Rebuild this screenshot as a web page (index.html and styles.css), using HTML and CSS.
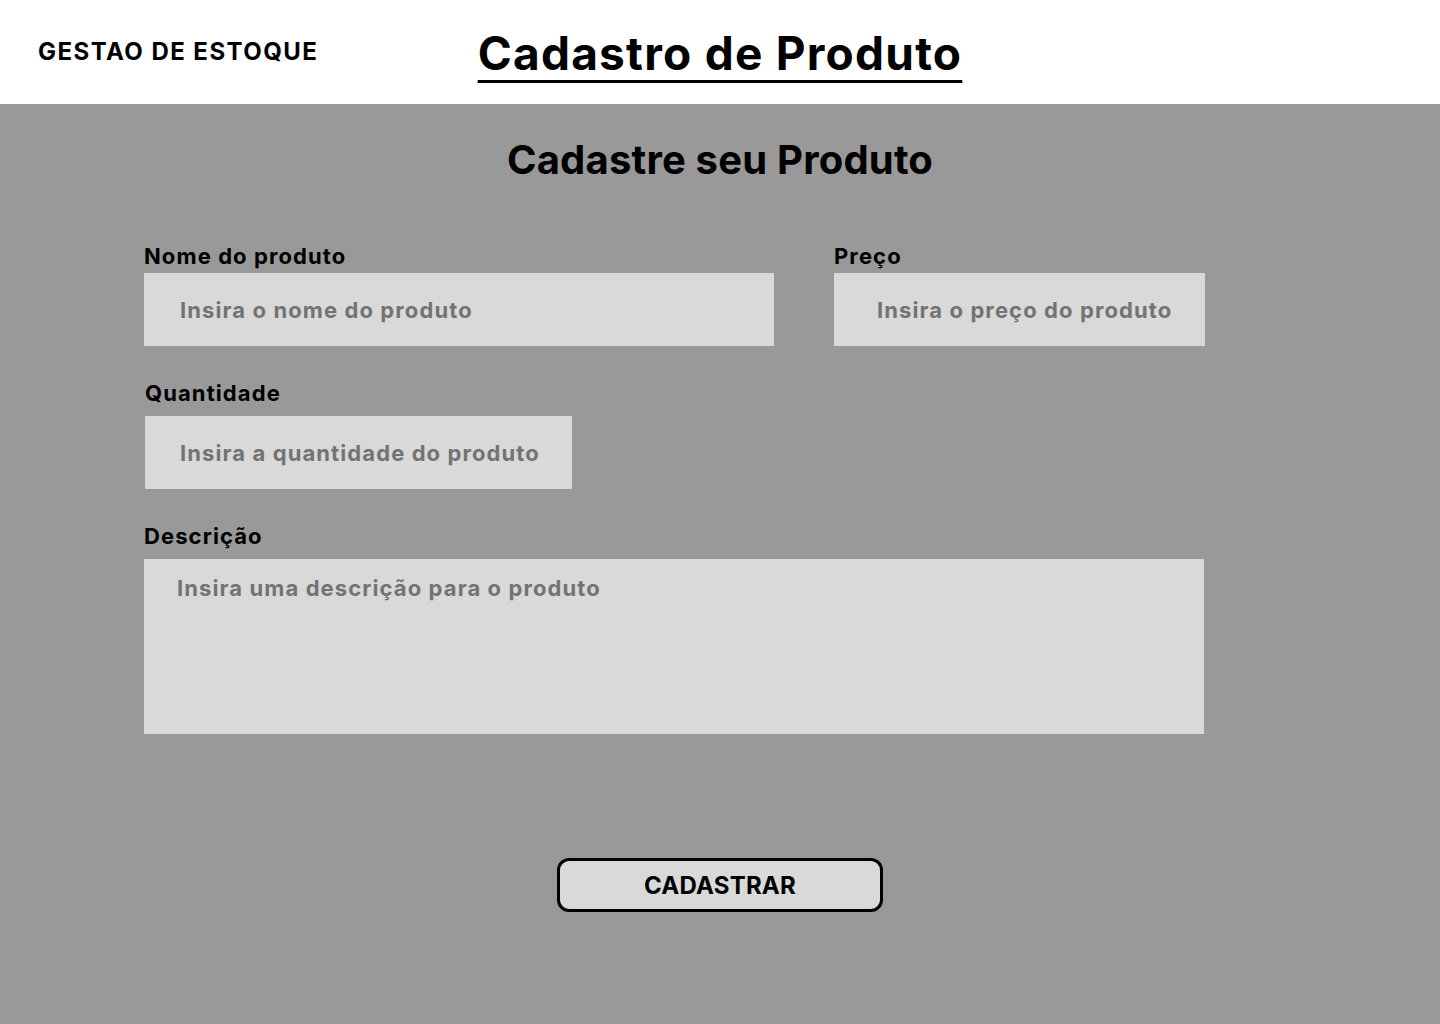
FILE: index.html
```html
<!DOCTYPE html>
<html lang="pt-BR">
<head>
<meta charset="utf-8">
<title>Cadastro de Produto</title>
<link rel="stylesheet" href="styles.css">
</head>
<body>
<header class="topbar">
  <div class="brand">GESTAO DE ESTOQUE</div>
  <h1 class="page-title">Cadastro de Produto</h1>
  <div class="spacer"></div>
</header>
<main class="main">
  <h2 class="form-title">Cadastre seu Produto</h2>
  <form class="form">
    <div class="row row-first">
      <label class="field field-name">
        <span class="label">Nome do produto</span>
        <input class="input" type="text" placeholder="Insira o nome do produto">
      </label>
      <label class="field field-price">
        <span class="label">Preço</span>
        <input class="input input-price" type="text" placeholder="Insira o preço do produto">
      </label>
    </div>
    <div class="row">
      <label class="field field-qty">
        <span class="label">Quantidade</span>
        <input class="input input-qty" type="text" placeholder="Insira a quantidade do produto">
      </label>
    </div>
    <div class="row">
      <label class="field field-desc">
        <span class="label">Descrição</span>
        <textarea class="input textarea" placeholder="Insira uma descrição para o produto"></textarea>
      </label>
    </div>
    <div class="actions">
      <button type="button" class="btn">CADASTRAR</button>
    </div>
  </form>
</main>
</body>
</html>
```

FILE: styles.css
```css
* { box-sizing: border-box; }
html, body { margin: 0; padding: 0; }
body {
  font-family: Inter, "Noto Sans", sans-serif;
  background: #999999;
  color: #000;
  min-height: 1024px;
}
.topbar {
  height: 104px;
  background: #ffffff;
  display: grid;
  grid-template-columns: 1fr auto 1fr;
  align-items: center;
}
.brand {
  padding-left: 38px;
  font-size: 24px;
  font-weight: 700;
  letter-spacing: 1.45px;
  padding-bottom: 2px;
}
.page-title {
  margin: 0;
  font-size: 46px;
  font-weight: 700;
  letter-spacing: 1.25px;
  line-height: 56px;
  text-decoration: underline;
  text-decoration-thickness: 3px;
  text-underline-offset: 10px;
  padding-top: 1px;
}
.main {
  padding: 28px 0 0 0;
}
.form-title {
  margin: 0;
  text-align: center;
  font-size: 40px;
  font-weight: 700;
  letter-spacing: 0.2px;
  line-height: 56px;
}
.form {
  width: 1060px;
  margin-left: 144px;
  margin-top: 55px;
  display: flex;
  flex-direction: column;
  gap: 34px;
}
.row {
  display: flex;
  gap: 60px;
}
.field {
  display: flex;
  flex-direction: column;
  flex-shrink: 0;
}
.label {
  font-size: 22px;
  font-weight: 700;
  letter-spacing: 1.1px;
  line-height: 27px;
  margin-bottom: 9px;
}
.row-first .label { margin-bottom: 3px; }
.field-name { width: 630px; }
.field-price { width: 371px; }
.field-qty { width: 427px; margin-left: 1px; }
.field-desc { width: 1060px; }
.input {
  height: 73px;
  border: none;
  outline: none;
  background: #d9d9d9;
  font-family: Inter, "Noto Sans", sans-serif;
  font-size: 22px;
  font-weight: 700;
  letter-spacing: 1.1px;
  color: #333;
  padding: 0 0 0 36px;
  margin: 0;
  border-radius: 0;
}
.input-price { padding-left: 43px; }
.input-qty { padding-left: 35px; }
.textarea {
  height: 175px;
  resize: none;
  padding: 16px 0 0 33px;
  line-height: 27px;
}
.input::placeholder {
  color: #737373;
  opacity: 1;
}
.actions {
  display: flex;
  justify-content: center;
  margin-top: 90px;
  padding-left: 92px;
}
.btn {
  width: 326px;
  height: 54px;
  background: #d9d9d9;
  border: 3px solid #000;
  border-radius: 12px;
  font-family: Inter, "Noto Sans", sans-serif;
  font-size: 24px;
  font-weight: 700;
  letter-spacing: 0.2px;
  color: #000;
  cursor: pointer;
}
```
